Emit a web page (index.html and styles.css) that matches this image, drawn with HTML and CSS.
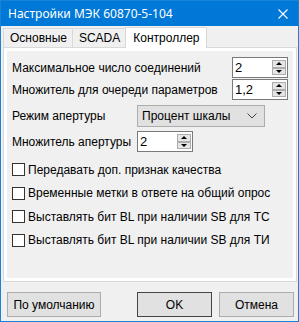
FILE: index.html
```html
<!DOCTYPE html>
<html lang="ru">
<head>
<meta charset="utf-8">
<link rel="stylesheet" href="styles.css">
</head>
<body>
<div class="window">
  <div class="titlebar">
    <span class="title">Настройки МЭК 60870-5-104</span>
    <svg class="close" width="10" height="10" viewBox="0 0 10 10"><path d="M0.5 0.5L9.5 9.5M9.5 0.5L0.5 9.5" stroke="#fff" stroke-width="1.1" fill="none"/></svg>
  </div>
  <div class="client">
    <div class="tabs">
      <div class="tab">Основные</div>
      <div class="tab">SCADA</div>
      <div class="tab active">Контроллер</div>
    </div>
    <div class="panel">
      <div class="page">
        <div class="row wide r1">
          <span>Максимальное число соединений</span>
          <div class="spin w57"><span class="val">2</span><div class="btns"><div class="sb"><i class="up"></i></div><div class="sb"><i class="down"></i></div></div></div>
        </div>
        <div class="row wide r2">
          <span>Множитель для очереди параметров</span>
          <div class="spin w57"><span class="val">1,2</span><div class="btns"><div class="sb"><i class="up"></i></div><div class="sb"><i class="down"></i></div></div></div>
        </div>
        <div class="row grid r3">
          <span>Режим апертуры</span>
          <div class="combo"><span>Процент шкалы</span><svg width="10" height="6" viewBox="0 0 10 6"><path d="M0.5 0.5L5 5L9.5 0.5" stroke="#444" stroke-width="1" fill="none"/></svg></div>
        </div>
        <div class="row grid r4">
          <span>Множитель апертуры</span>
          <div class="spin w56"><span class="val">2</span><div class="btns"><div class="sb"><i class="up"></i></div><div class="sb"><i class="down"></i></div></div></div>
        </div>
        <div class="checks">
          <label class="check"><span class="box"></span>Передавать доп. признак качества</label>
          <label class="check"><span class="box"></span>Временные метки в ответе на общий опрос</label>
          <label class="check"><span class="box"></span>Выставлять бит BL при наличии SB для ТС</label>
          <label class="check"><span class="box"></span>Выставлять бит BL при наличии SB для ТИ</label>
        </div>
      </div>
    </div>
    <div class="buttons">
      <div class="btn bdef">По умолчанию</div>
      <div class="right">
        <div class="btn bok">OK</div>
        <div class="btn bcancel">Отмена</div>
      </div>
    </div>
  </div>
</div>
</body>
</html>
```
FILE: styles.css
```css
* { box-sizing: border-box; }
html, body { margin: 0; padding: 0; background: #fff; }
body { font-family: "Liberation Sans", Arial, sans-serif; font-size: 12px; color: #000; white-space: nowrap; }
.window {
  width: 299px; height: 322px;
  border: 1px solid #1883d7;
  display: flex; flex-direction: column;
  background: #f0f0f0;
}
.titlebar {
  height: 25px; background: #0078d7; color: #fff;
  display: flex; align-items: center; justify-content: space-between;
  padding: 0 10px 0 7px;
  font-family: "Noto Sans", "Open Sans", sans-serif; font-size: 12px;
}
.client { flex: 1; display: flex; flex-direction: column; padding: 0 1px 0 2px; }
.tabs { display: flex; align-items: flex-end; height: 21px; }
.tab {
  height: 19px; padding: 0 5px 0 6px; line-height: 18px;
  border: 1px solid #d9d9d9; border-bottom: none;
  background: #f0f0f0; margin-left: -1px;
}
.tab:first-child { margin-left: 0; }
.tab.active {
  height: 21px; background: #fff; line-height: 20px;
  position: relative; z-index: 1; margin-bottom: -1px; padding: 0 6px 0 7px;
}
.panel {
  height: 235px; border: 1px solid #d9d9d9; background: #fff; padding: 3px;
}
.page { height: 100%; background: #f0f0f0; padding: 6px 5px 0 5px; }
.row { display: flex; align-items: center; }
.wide { justify-content: space-between; height: 21px; margin-bottom: 1px; }
.grid { display: grid; grid-template-columns: 125px auto; justify-content: start; }
.r3 { margin-top: 5px; height: 22px; }
.r4 { margin-top: 4px; height: 21px; }
.spin {
  height: 21px; border: 1px solid #7a7a7a; background: #fff;
  display: flex; justify-content: space-between; align-items: stretch;
  padding: 1px 1px 1px 2px;
}
.w57 { width: 56px; }
.w56 { width: 56px; }
.val { line-height: 17px; font-size: 13px; }
.btns { display: flex; flex-direction: column; justify-content: space-between; padding: 1px 0; width: 14px; }
.sb {
  height: 8px; border: 1px solid #adadad; background: #e5e5e5;
  display: flex; align-items: center; justify-content: center;
}
.up { width: 0; height: 0; border-left: 3px solid transparent; border-right: 3px solid transparent; border-bottom: 3px solid #000; }
.down { width: 0; height: 0; border-left: 3px solid transparent; border-right: 3px solid transparent; border-top: 3px solid #000; }
.combo {
  width: 128px; height: 22px; border: 1px solid #adadad; background: #e1e1e1;
  display: flex; align-items: center; justify-content: space-between; padding: 0 7px 0 4px;
}
.checks { display: flex; flex-direction: column; gap: 10px; margin-top: 11px; }
.check { display: flex; align-items: center; height: 13.5px; gap: 3px; }
.box { width: 13px; height: 13px; border: 1px solid #333; background: #fff; flex: none; }
.buttons { display: flex; justify-content: space-between; margin-top: 10px; padding: 0 3px 0 4px; }
.right { display: flex; gap: 7px; }
.btn {
  height: 25px; border: 1px solid #adadad; background: #e1e1e1;
  display: flex; align-items: center; justify-content: center;
}
.bdef { width: 94px; }
.bok { width: 75px; border: 1px solid #444; }
.bcancel { width: 75px; }
```
